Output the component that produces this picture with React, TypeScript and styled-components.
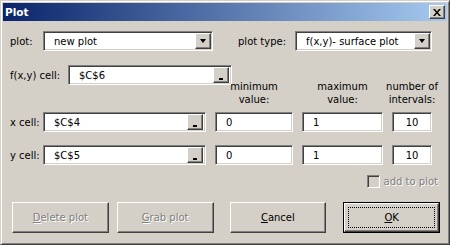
import React from "react";
import styled, { createGlobalStyle, css } from "styled-components";

const GlobalStyle = createGlobalStyle`
  html, body {
    margin: 0;
    padding: 0;
    background: #d4d0c8;
  }
  body {
    font-family: "DejaVu Sans", "Liberation Sans", sans-serif;
    font-size: 10px;
    color: #000;
  }
`;

const raised = css`
  box-sizing: border-box;
  background: #d4d0c8;
  border: 1px solid;
  border-color: #fff #404040 #404040 #fff;
  box-shadow: inset -1px -1px #808080;
`;

const sunken = css`
  box-sizing: border-box;
  background: #fff;
  border: 1px solid;
  border-color: #808080 #fff #fff #808080;
  box-shadow: inset 1px 1px #404040, inset -1px -1px #d4d0c8;
`;

const gridColumns = css`
  display: grid;
  grid-template-columns: 24px 163px 78px 81px 40px;
  column-gap: 9px;
`;

const Window = styled.div`
  box-sizing: border-box;
  width: 450px;
  height: 245px;
  border: 1px solid;
  border-color: #d4d0c8 #404040 #404040 #d4d0c8;
  box-shadow: inset 1px 1px #fff, inset -1px -1px #808080;
  padding: 2px;
  display: flex;
  flex-direction: column;
`;

const TitleBar = styled.div`
  height: 18px;
  flex: none;
  display: flex;
  align-items: center;
  padding: 0 2px 0 2px;
  background: linear-gradient(to right, #0a246a, #a6caf0);
`;

const Title = styled.span`
  color: #fff;
  font-weight: bold;
  font-size: 10.5px;
`;

const CloseButton = styled.div`
  ${raised};
  margin-left: auto;
  width: 16px;
  height: 14px;
  display: flex;
  align-items: center;
  justify-content: center;
`;

const Body = styled.div`
  padding: 10px 7px 0 7px;
  display: flex;
  flex-direction: column;
`;

const TopRow = styled.div`
  display: flex;
  align-items: center;
  height: 20px;
`;

const Label = styled.span<{ $width?: number; $gap?: number }>`
  white-space: nowrap;
  width: ${(p) => (p.$width ? `${p.$width}px` : "auto")};
  margin-left: ${(p) => p.$gap ?? 0}px;
  flex: none;
`;

const Field = styled.div<{ $width?: number; $center?: boolean }>`
  ${sunken};
  height: 20px;
  width: ${(p) => (p.$width ? `${p.$width}px` : "auto")};
  padding: 2px 2px 2px 10px;
  display: flex;
  align-items: center;
  justify-content: ${(p) => (p.$center ? "center" : "flex-start")};
  padding-left: ${(p) => (p.$center ? "2px" : "10px")};
  flex: none;
`;

const FieldText = styled.span`
  flex: 1;
  white-space: nowrap;
`;

const DropButton = styled.div`
  ${raised};
  width: 16px;
  height: 16px;
  margin: -2px -1px -2px 0;
  display: flex;
  align-items: center;
  justify-content: center;
`;

const Arrow = styled.div`
  width: 0;
  height: 0;
  border-left: 3.5px solid transparent;
  border-right: 3.5px solid transparent;
  border-top: 4px solid #000;
`;

const RefButton = styled.div`
  ${raised};
  width: 16px;
  height: 16px;
  margin: -2px 0 -2px 0;
  display: flex;
  justify-content: center;
  padding-top: 10px;
`;

const RefMark = styled.div`
  width: 4px;
  height: 2px;
  background: #000;
`;

const UpperGrid = styled.div`
  ${gridColumns};
  margin-top: 14px;
  height: 41px;
`;

const CellRow = styled.div`
  grid-column: 1 / 4;
  grid-row: 1;
  align-self: start;
  display: flex;
  align-items: center;
  height: 20px;
`;

const Header = styled.div<{ $col: number }>`
  grid-column: ${(p) => p.$col};
  grid-row: 1;
  align-self: end;
  justify-self: center;
  text-align: center;
  white-space: nowrap;
  line-height: 13px;
`;

const FieldGrid = styled.div`
  ${gridColumns};
  grid-auto-rows: 20px;
  row-gap: 13px;
  margin-top: 6px;
  align-items: center;
`;

const CheckRow = styled.div`
  display: flex;
  justify-content: flex-end;
  align-items: center;
  gap: 4px;
  margin-top: 10px;
  padding-right: 2px;
  height: 13px;
`;

const CheckBox = styled.div`
  box-sizing: border-box;
  width: 13px;
  height: 13px;
  border: 1px solid;
  border-color: #808080 #fff #fff #808080;
  box-shadow: inset 1px 1px #404040, inset -1px -1px #d4d0c8;
  background: #d4d0c8;
`;

const DisabledText = styled.span`
  color: #808080;
  text-shadow: 1px 1px #fff;
`;

const ButtonRow = styled.div`
  display: flex;
  gap: 8px;
  margin-top: 14px;
  padding-left: 2px;
`;

const Button = styled.div<{ $split?: boolean; $disabled?: boolean }>`
  ${raised};
  width: 97px;
  height: 31px;
  display: flex;
  align-items: center;
  justify-content: center;
  margin-left: ${(p) => (p.$split ? 8 : 0)}px;
  color: ${(p) => (p.$disabled ? "#808080" : "#000")};
  text-shadow: ${(p) => (p.$disabled ? "1px 1px #fff" : "none")};
`;

const DefaultButton = styled.div`
  box-sizing: border-box;
  width: 97px;
  height: 31px;
  margin-left: 9px;
  border: 1px solid #000;
  display: flex;
`;

const DefaultInner = styled.div`
  ${raised};
  flex: 1;
  padding: 3px;
  display: flex;
`;

const FocusRect = styled.div`
  flex: 1;
  border: 1px dotted #000;
  display: flex;
  align-items: center;
  justify-content: center;
`;

const Key = styled.span`
  text-decoration: underline;
`;

const ComboBox: React.FC<{ width: number; value: string }> = ({ width, value }) => (
  <Field $width={width}>
    <FieldText>{value}</FieldText>
    <DropButton>
      <Arrow />
    </DropButton>
  </Field>
);

const RefEdit: React.FC<{ width?: number; value: string }> = ({ width, value }) => (
  <Field $width={width}>
    <FieldText>{value}</FieldText>
    <RefButton>
      <RefMark />
    </RefButton>
  </Field>
);

const rows = [
  { label: "x cell:", ref: "$C$4" },
  { label: "y cell:", ref: "$C$5" },
];

const App: React.FC = () => (
  <>
    <GlobalStyle />
    <Window>
      <TitleBar>
        <Title>Plot</Title>
        <CloseButton>
          <svg width="8" height="7" viewBox="0 0 8 7">
            <path d="M0 0h2l2 2.5 2-2.5h2L5 3.5 8 7H6L4 4.5 2 7H0l3-3.5z" fill="#000" />
          </svg>
        </CloseButton>
      </TitleBar>
      <Body>
        <TopRow>
          <Label $width={33}>plot:</Label>
          <ComboBox width={170} value="new plot" />
          <Label $width={57} $gap={25}>
            plot type:
          </Label>
          <ComboBox width={137} value="f(x,y)- surface plot" />
        </TopRow>
        <UpperGrid>
          <CellRow>
            <Label $width={58}>f(x,y) cell:</Label>
            <RefEdit width={164} value="$C$6" />
          </CellRow>
          <Header $col={3}>
            minimum
            <br />
            value:
          </Header>
          <Header $col={4}>
            maximum
            <br />
            value:
          </Header>
          <Header $col={5}>
            number of
            <br />
            intervals:
          </Header>
        </UpperGrid>
        <FieldGrid>
          {rows.map((row) => (
            <React.Fragment key={row.label}>
              <Label>{row.label}</Label>
              <RefEdit value={row.ref} />
              <Field>0</Field>
              <Field>1</Field>
              <Field $center>10</Field>
            </React.Fragment>
          ))}
        </FieldGrid>
        <CheckRow>
          <CheckBox />
          <DisabledText>add to plot</DisabledText>
        </CheckRow>
        <ButtonRow>
          <Button $disabled>
            <span>
              <Key>D</Key>elete plot
            </span>
          </Button>
          <Button $disabled>
            <span>
              <Key>G</Key>rab plot
            </span>
          </Button>
          <Button $split>
            <span>
              <Key>C</Key>ancel
            </span>
          </Button>
          <DefaultButton>
            <DefaultInner>
              <FocusRect>
                <span>
                  <Key>O</Key>K
                </span>
              </FocusRect>
            </DefaultInner>
          </DefaultButton>
        </ButtonRow>
      </Body>
    </Window>
  </>
);

export default App;
